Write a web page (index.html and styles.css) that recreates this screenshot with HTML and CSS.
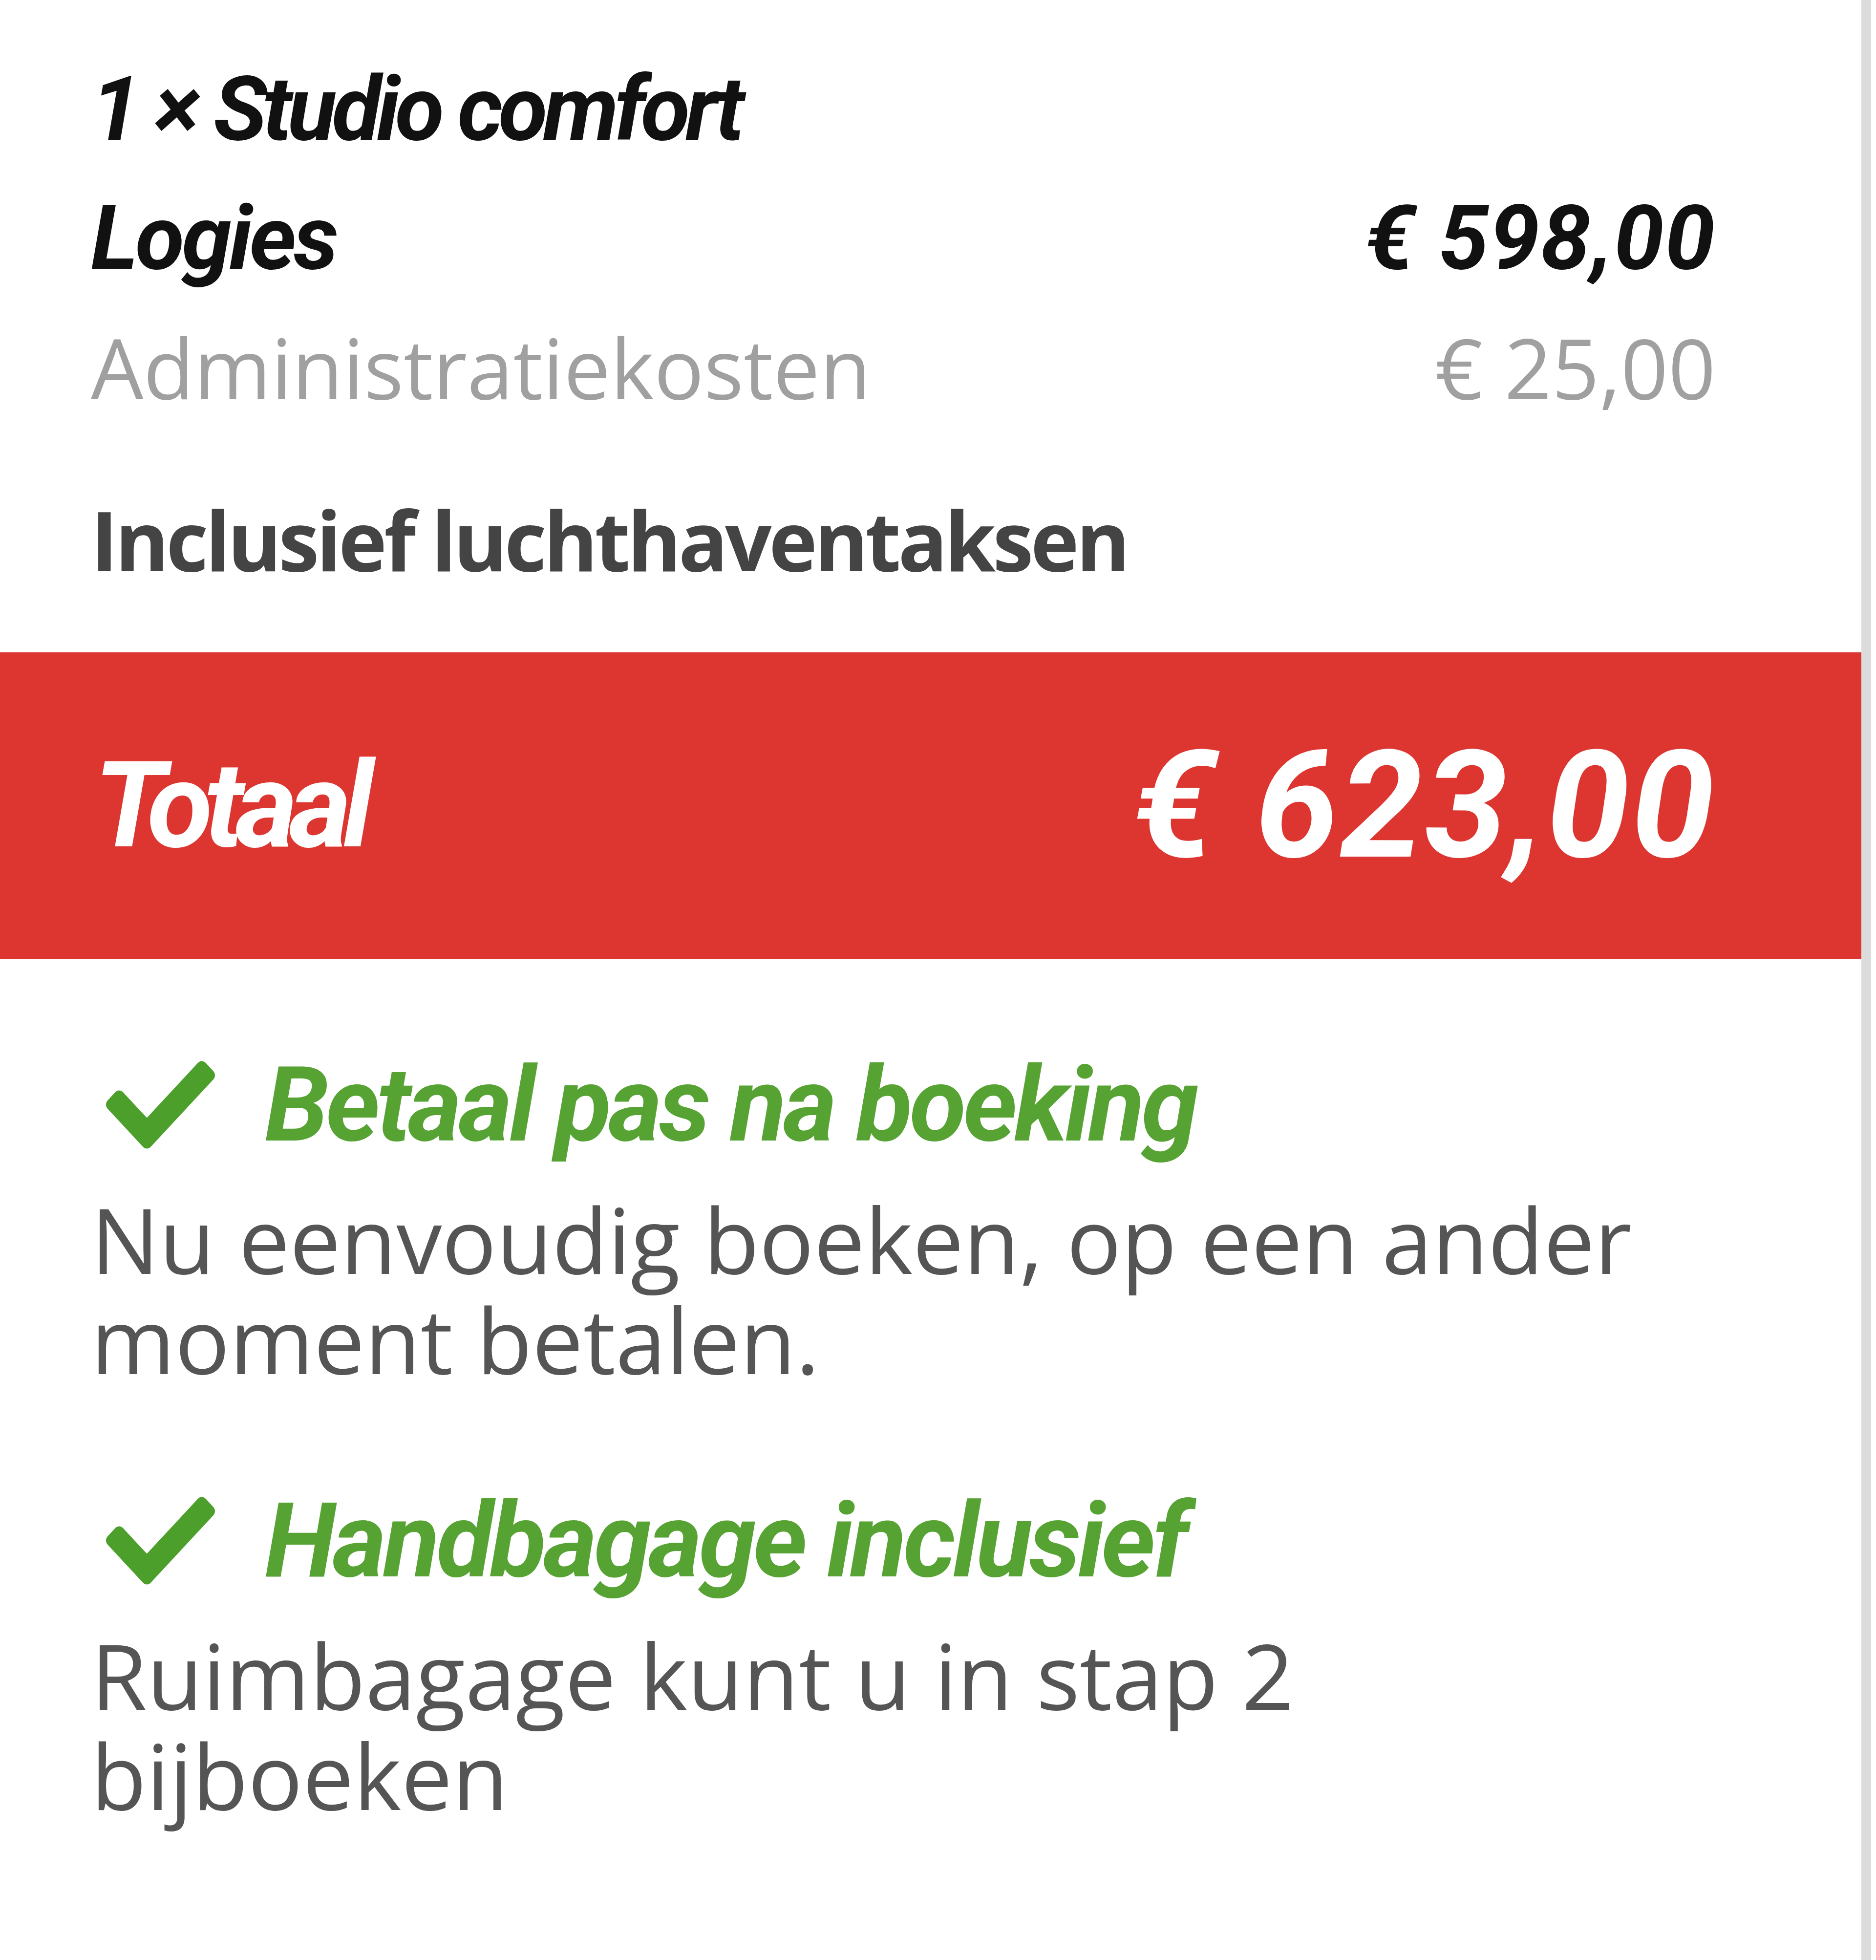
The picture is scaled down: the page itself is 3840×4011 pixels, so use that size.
FILE: index.html
```html
<!DOCTYPE html>
<html>
    <head>
        <meta charset="utf-8">
        <title>Boekingsoverzicht</title>
        <link rel="stylesheet" href="styles.css">
    </head>
    <body class="body">
        <div class="summary">
            <div class="lines">
                <div class="row title">1 × Studio comfort</div>
                <div class="row main">
                    <span class="label">Logies</span>
                    <span class="amount">€ 598,00</span>
                </div>
                <div class="row sub">
                    <span>Administratiekosten</span>
                    <span>€ 25,00</span>
                </div>
                <div class="row note">Inclusief luchthaventaksen</div>
            </div>

            <div class="total">
                <span class="total_label">Totaal</span>
                <span class="total_price">€ 623,00</span>
            </div>

            <div class="usps">
                <div class="usp">
                    <div class="usp_head">
                        <svg class="check" viewBox="0 64 512 384" preserveAspectRatio="none">
                            <path d="M173.9 439.4L7.5 273c-10-10-10-26.2 0-36.2l36.2-36.2c10-10 26.2-10 36.2 0L192 312.7 432.1 72.6c10-10 26.2-10 36.2 0l36.2 36.2c10 10 10 26.2 0 36.2L210.1 439.4c-10 10-26.2 10-36.2 0z"/>
                        </svg>
                        <span>Betaal pas na boeking</span>
                    </div>
                    <p class="usp_text">Nu eenvoudig boeken, op een ander moment betalen.</p>
                </div>
                <div class="usp">
                    <div class="usp_head">
                        <svg class="check" viewBox="0 64 512 384" preserveAspectRatio="none">
                            <path d="M173.9 439.4L7.5 273c-10-10-10-26.2 0-36.2l36.2-36.2c10-10 26.2-10 36.2 0L192 312.7 432.1 72.6c10-10 26.2-10 36.2 0l36.2 36.2c10 10 10 26.2 0 36.2L210.1 439.4c-10 10-26.2 10-36.2 0z"/>
                        </svg>
                        <span>Handbagage inclusief</span>
                    </div>
                    <p class="usp_text">Ruimbagage kunt u in stap 2 bijboeken</p>
                </div>
            </div>
        </div>
    </body>
</html>
```

FILE: styles.css
```css
.body{
    margin:0;
    background-color:#fff;
}

.summary{
    width:3810px;
    min-height:100vh;
    border-right:20px solid #dcdcdc;
    background-color:#fff;
}

.lines{
    padding:91px 298px 99px 186px;
}

.row{
    display:flex;
    justify-content:space-between;
    line-height:264px;
    white-space:nowrap;
}

.title,
.main{
    font-family:Roboto, "Liberation Sans", sans-serif;
    font-weight:bold;
    font-style:italic;
    font-size:184px;
    color:#111;
}
.title{
    letter-spacing:-0.05em;
}
.main .label{
    letter-spacing:-0.03em;
}
.main .amount{
    letter-spacing:0.01em;
}

.sub{
    font-family:"Open Sans", "Liberation Sans", sans-serif;
    font-size:170px;
    color:#a0a0a0;
}

.note{
    margin-top:89px;
    font-family:"Open Sans", "Liberation Sans", sans-serif;
    font-weight:bold;
    font-size:168px;
    letter-spacing:-6px;
    color:#444;
}

.total{
    height:627px;
    background-color:#dd3631;
    color:#fff;
    display:flex;
    justify-content:space-between;
    align-items:center;
    padding:0 298px 0 186px;
    font-family:Roboto, "Liberation Sans", sans-serif;
    font-weight:bold;
    font-style:italic;
    line-height:1;
}
.total_label{
    font-size:245px;
    letter-spacing:-0.07em;
    padding-left:6px;
}
.total_price{
    font-size:306px;
    letter-spacing:0.01em;
}

.usps{
    padding:172px 298px 0 186px;
}

.usp + .usp{
    margin-top:184px;
}

.usp_head{
    display:flex;
    align-items:center;
    height:254px;
    font-family:Roboto, "Liberation Sans", sans-serif;
    font-weight:bold;
    font-style:italic;
    font-size:212px;
    letter-spacing:-0.03em;
    color:#56a333;
    white-space:nowrap;
}

.check{
    width:223px;
    height:180px;
    margin:0 102px 0 31px;
    fill:#4d9f2b;
    flex:none;
}

.usp_text{
    margin:44px 0 0 0;
    width:3200px;
    font-family:"Open Sans", "Liberation Sans", sans-serif;
    font-size:186px;
    line-height:205px;
    color:#555;
}
```
